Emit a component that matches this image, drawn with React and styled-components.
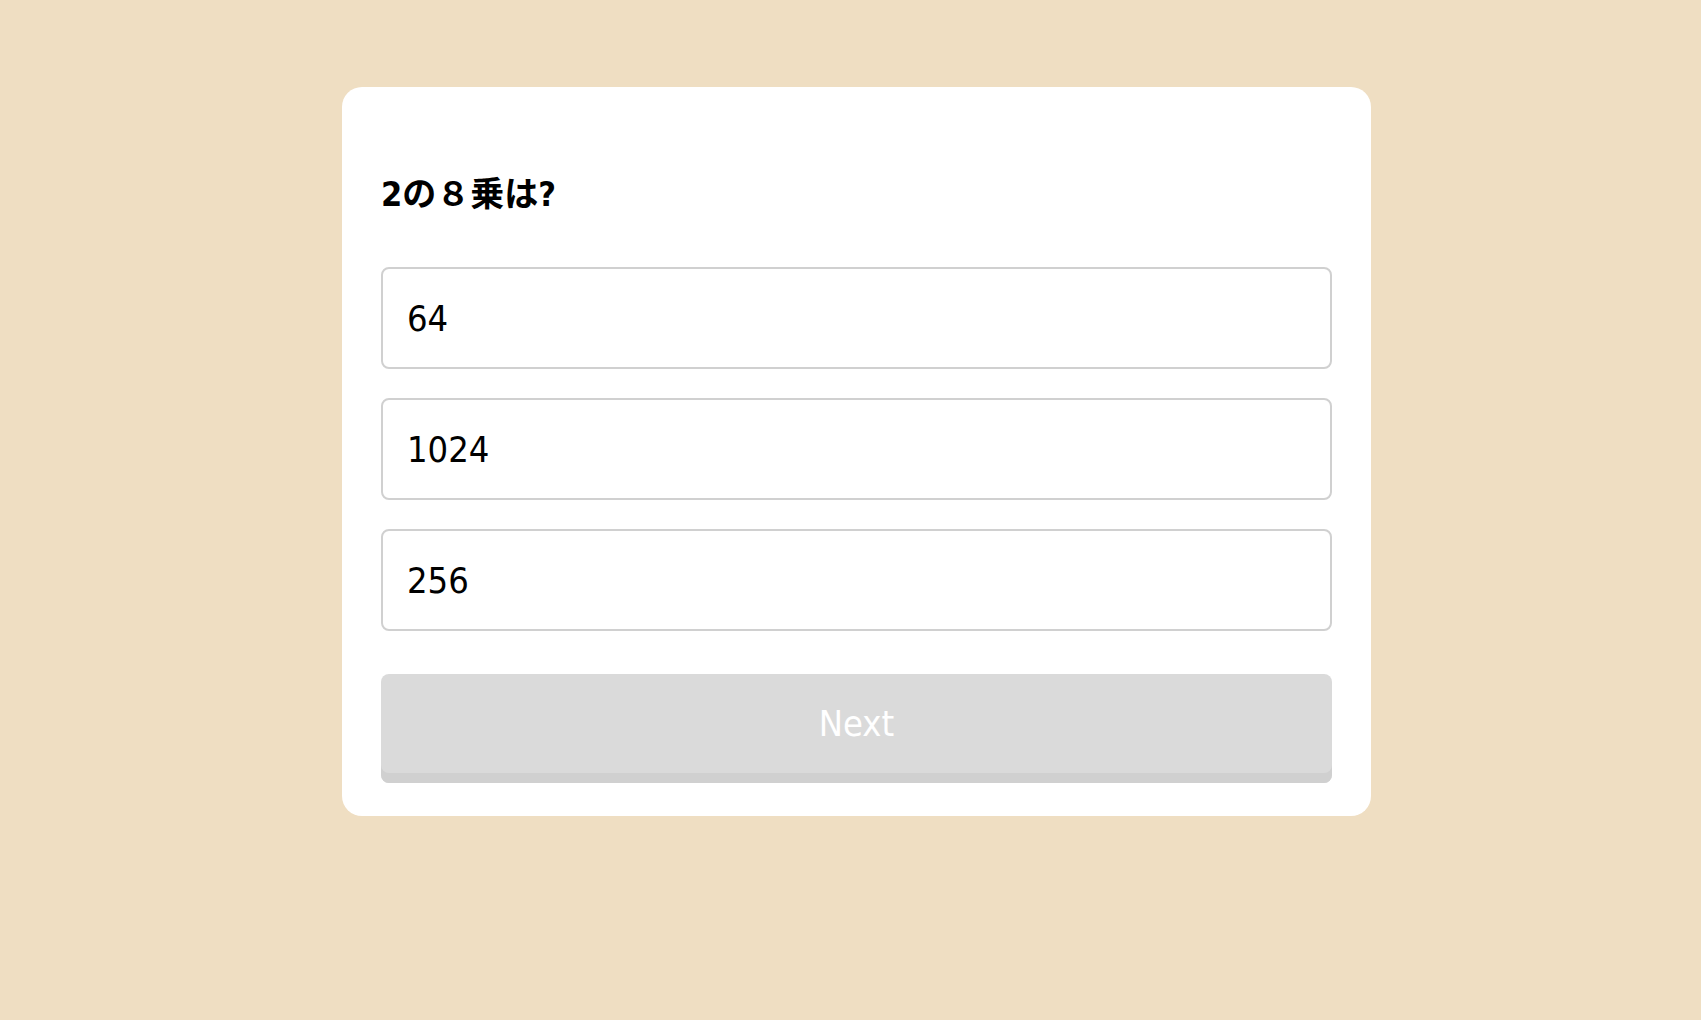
import React, { useState } from "react";
import styled, { createGlobalStyle } from "styled-components";

const GlobalStyle = createGlobalStyle`
  html, body {
    margin: 0;
    padding: 0;
    background: #efdec2;
  }
  body {
    min-height: 1020px;
    font-family: "DejaVu Sans Condensed", "DejaVu Sans", "Noto Sans CJK JP", sans-serif;
  }
`

const Page = styled.div`
  display: flex;
  justify-content: center;
  padding: 87px 0 0 12px;
`

const Card = styled.div`
  width: 1029px;
  box-sizing: border-box;
  background: #ffffff;
  border-radius: 20px;
  padding: 40px 39px 33px;
`

const Question = styled.h2`
  margin: 45px 0 50px;
  font-family: "DejaVu Sans Condensed", "DejaVu Sans", "Noto Sans CJK JP", sans-serif;
  font-size: 34px;
  line-height: 45px;
  font-weight: 700;
  color: #000;
`

const Options = styled.ul`
  list-style: none;
  margin: 0;
  padding: 0;
  display: flex;
  flex-direction: column;
  gap: 29px;
`

const Option = styled.li`
  height: 102px;
  box-sizing: border-box;
  display: flex;
  align-items: center;
  padding: 0 24px;
  border: 2px solid ${p => (p.$selected ? "#999" : "#d0d0d0")};
  border-radius: 8px;
  font-size: 36px;
  color: #000;
  cursor: pointer;
`

const NextButton = styled.button`
  margin-top: 43px;
  width: 100%;
  height: 109px;
  padding: 0 0 10px;
  border: none;
  border-radius: 8px;
  background: #dadada;
  box-shadow: inset 0 -10px 0 #d0d0d0;
  color: #ffffff;
  font-family: "DejaVu Sans Condensed", "DejaVu Sans", sans-serif;
  font-size: 36px;
  cursor: default;
`

const App = () => {
  const answers = ["64", "1024", "256"]
  const [picked, setPicked] = useState(null)

  return (
    <>
      <GlobalStyle />
      <Page>
        <Card>
          <Question>2の８乗は?</Question>
          <Options>
            {answers.map((a, i) => (
              <Option key={a} $selected={picked === i} onClick={() => setPicked(i)}>
                {a}
              </Option>
            ))}
          </Options>
          <NextButton disabled={picked === null}>Next</NextButton>
        </Card>
      </Page>
    </>
  )
}

export default App;
